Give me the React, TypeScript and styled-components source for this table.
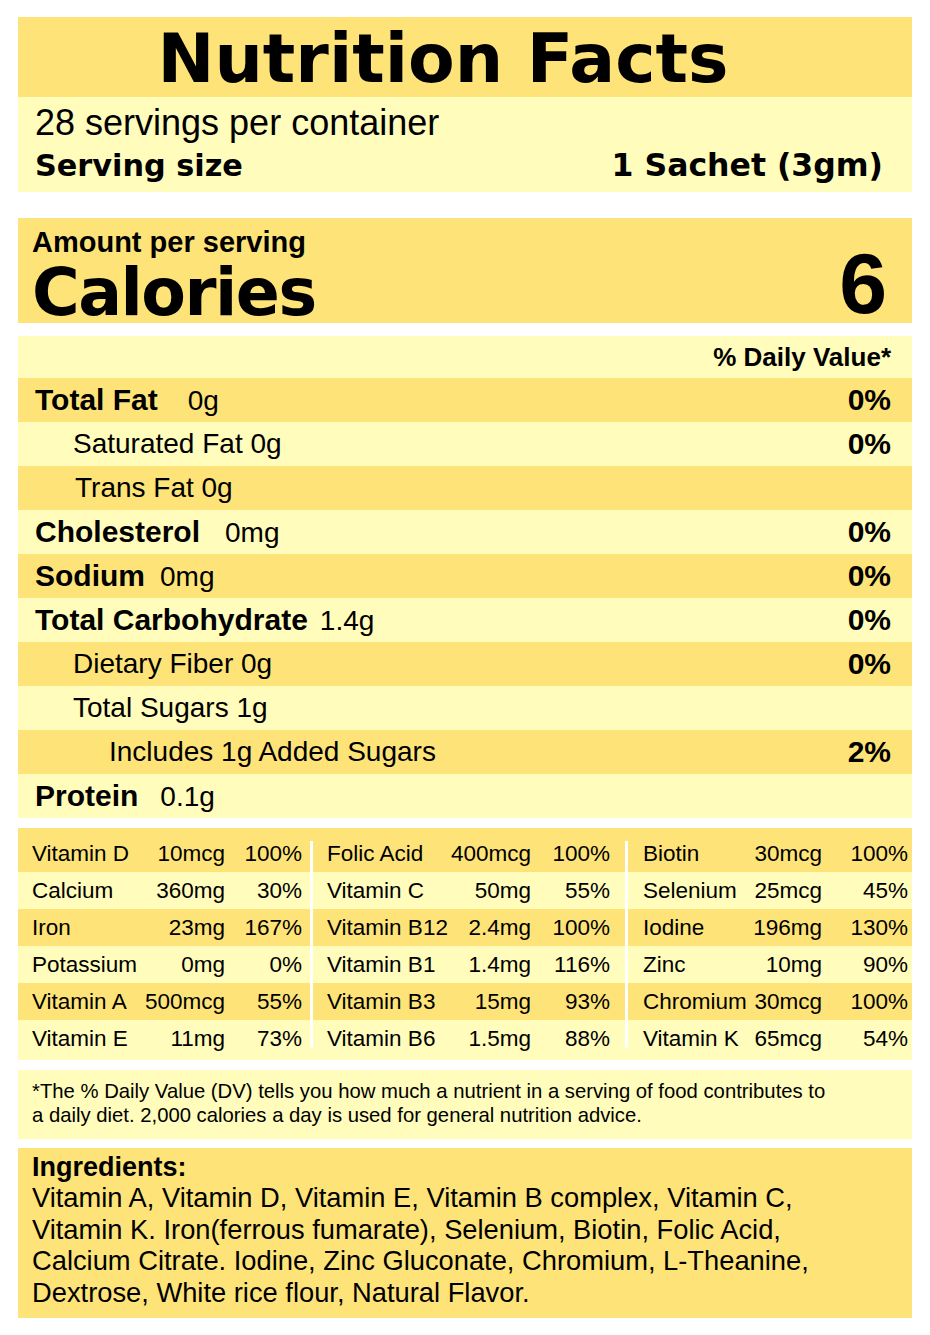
import React from 'react';
import styled, { createGlobalStyle } from 'styled-components';

const DARK = '#FEE478';
const LIGHT = '#FFFCBC';
type Tone = 'dark' | 'light';
const toneBg = (t: Tone) => (t === 'dark' ? DARK : LIGHT);

const GlobalStyle = createGlobalStyle`
  html, body { margin: 0; padding: 0; background: #ffffff; }
  body { font-family: "Liberation Sans", Arial, sans-serif; color: #000; }
  * { box-sizing: border-box; }
`;

const Page = styled.main`
  width: 930px;
  padding: 17px 18px;
  display: flex;
  flex-direction: column;
`;

const TitleBar = styled.h1`
  margin: 0;
  height: 80px;
  padding: 3px 44px 0 0;
  background: ${DARK};
  font-family: "DejaVu Sans", sans-serif;
  font-weight: 700;
  font-size: 68px;
  line-height: 77px;
  text-align: center;
  white-space: nowrap;
`;

const ServingPanel = styled.section`
  background: ${LIGHT};
  padding: 6px 29px 4px 17px;
`;

const ServingsPerContainer = styled.div`
  font-size: 36px;
  line-height: 40px;
`;

const ServingSizeRow = styled.div`
  display: flex;
  justify-content: space-between;
  align-items: baseline;
  font-family: "DejaVu Sans", sans-serif;
  font-weight: 700;
  font-size: 31.5px;
  line-height: 44px;
`;

const ServingSizeLabel = styled.span`
  font-size: 30.3px;
`;

const CaloriesPanel = styled.section`
  margin-top: 26px;
  height: 105px;
  background: ${DARK};
  padding: 8px 25px 0 14px;
  display: flex;
  justify-content: space-between;
`;

const CaloriesLeft = styled.div`
  display: flex;
  flex-direction: column;
`;

const AmountLabel = styled.div`
  font-weight: 700;
  font-size: 29px;
  line-height: 32px;
`;

const CaloriesLabel = styled.div`
  margin-top: 5px;
  font-family: "DejaVu Sans", sans-serif;
  font-weight: 700;
  font-size: 65px;
  letter-spacing: -1.5px;
  line-height: 60px;
`;

const CaloriesValue = styled.div`
  align-self: flex-end;
  font-weight: 700;
  font-size: 86px;
  line-height: 80px;
`;

const NutrientSection = styled.section`
  margin-top: 13px;
  display: flex;
  flex-direction: column;
`;

const NutrientRow = styled.div<{ $tone: Tone; $indent: number; $height: number }>`
  height: ${(p) => p.$height}px;
  background: ${(p) => toneBg(p.$tone)};
  padding: 0 21px 0 ${(p) => p.$indent}px;
  display: flex;
  align-items: center;
  justify-content: space-between;
  white-space: nowrap;
`;

const RowText = styled.div``;

const BoldLabel = styled.span`
  font-weight: 700;
  font-size: 30px;
`;

const PlainLabel = styled.span`
  font-size: 28px;
`;

const Amount = styled.span<{ $gap: number }>`
  font-size: 28px;
  margin-left: ${(p) => p.$gap}px;
`;

const Percent = styled.span`
  font-weight: 700;
  font-size: 30px;
`;

const DailyValueHead = styled.span`
  margin-left: auto;
  font-weight: 700;
  font-size: 26px;
`;

const VitaminPanel = styled.section`
  position: relative;
  margin-top: 10px;
  background: ${LIGHT};
  border-top: 7px solid ${DARK};
  padding-bottom: 3px;
`;

const VitaminRow = styled.div<{ $tone: Tone }>`
  height: 37px;
  background: ${(p) => toneBg(p.$tone)};
  display: grid;
  grid-template-columns: 295px 315px 284px;
  align-items: center;
  font-size: 22.5px;
  white-space: nowrap;
`;

const VitaminGroup = styled.div<{ $pad: number; $cols: string }>`
  display: grid;
  grid-template-columns: ${(p) => p.$cols};
  padding-left: ${(p) => p.$pad}px;
`;

const VitName = styled.span``;
const VitNum = styled.span`
  text-align: right;
`;

const Separator = styled.div<{ $left: number }>`
  position: absolute;
  top: 6px;
  bottom: 12px;
  left: ${(p) => p.$left}px;
  width: 3px;
  background: #ffffff;
`;

const FootnotePanel = styled.section`
  margin-top: 10px;
  background: ${LIGHT};
  padding: 9px 14px 12px;
`;

const Footnote = styled.p`
  margin: 0;
  max-width: 800px;
  font-size: 20.3px;
  line-height: 24px;
`;

const IngredientsPanel = styled.section`
  margin-top: 9px;
  background: ${DARK};
  padding: 4px 14px 9px;
`;

const IngredientsTitle = styled.div`
  font-weight: 700;
  font-size: 27px;
  line-height: 30px;
`;

const IngredientsText = styled.p`
  margin: 0;
  max-width: 810px;
  font-size: 27.3px;
  line-height: 31.67px;
`;

type Nutrient = {
  label: string;
  amount?: string;
  gap?: number;
  pct?: string;
  bold?: boolean;
  indent: number;
};

const nutrients: Nutrient[] = [
  { label: 'Total Fat', amount: '0g', gap: 30, pct: '0%', bold: true, indent: 17 },
  { label: 'Saturated Fat 0g', pct: '0%', indent: 55 },
  { label: 'Trans Fat 0g', indent: 57 },
  { label: 'Cholesterol', amount: '0mg', gap: 25, pct: '0%', bold: true, indent: 17 },
  { label: 'Sodium', amount: '0mg', gap: 15, pct: '0%', bold: true, indent: 17 },
  { label: 'Total Carbohydrate', amount: '1.4g', gap: 12, pct: '0%', bold: true, indent: 17 },
  { label: 'Dietary Fiber 0g', pct: '0%', indent: 55 },
  { label: 'Total Sugars 1g', indent: 55 },
  { label: 'Includes 1g Added Sugars', pct: '2%', indent: 91 },
  { label: 'Protein', amount: '0.1g', gap: 22, bold: true, indent: 17 },
];

type Vit = [string, string, string];
const vitaminGroups: { pad: number; cols: string; items: Vit[] }[] = [
  {
    pad: 14,
    cols: '108px 85px 77px',
    items: [
      ['Vitamin D', '10mcg', '100%'],
      ['Calcium', '360mg', '30%'],
      ['Iron', '23mg', '167%'],
      ['Potassium', '0mg', '0%'],
      ['Vitamin A', '500mcg', '55%'],
      ['Vitamin E', '11mg', '73%'],
    ],
  },
  {
    pad: 14,
    cols: '122px 82px 79px',
    items: [
      ['Folic Acid', '400mcg', '100%'],
      ['Vitamin C', '50mg', '55%'],
      ['Vitamin B12', '2.4mg', '100%'],
      ['Vitamin B1', '1.4mg', '116%'],
      ['Vitamin B3', '15mg', '93%'],
      ['Vitamin B6', '1.5mg', '88%'],
    ],
  },
  {
    pad: 15,
    cols: '108px 71px 86px',
    items: [
      ['Biotin', '30mcg', '100%'],
      ['Selenium', '25mcg', '45%'],
      ['Iodine', '196mg', '130%'],
      ['Zinc', '10mg', '90%'],
      ['Chromium', '30mcg', '100%'],
      ['Vitamin K', '65mcg', '54%'],
    ],
  },
];

export default function App() {
  return (
    <>
      <GlobalStyle />
      <Page>
        <TitleBar>Nutrition Facts</TitleBar>
        <ServingPanel>
          <ServingsPerContainer>28 servings per container</ServingsPerContainer>
          <ServingSizeRow>
            <ServingSizeLabel>Serving size</ServingSizeLabel>
            <span>1 Sachet (3gm)</span>
          </ServingSizeRow>
        </ServingPanel>

        <CaloriesPanel>
          <CaloriesLeft>
            <AmountLabel>Amount per serving</AmountLabel>
            <CaloriesLabel>Calories</CaloriesLabel>
          </CaloriesLeft>
          <CaloriesValue>6</CaloriesValue>
        </CaloriesPanel>

        <NutrientSection>
          <NutrientRow $tone="light" $indent={17} $height={42}>
            <DailyValueHead>% Daily Value*</DailyValueHead>
          </NutrientRow>
          {nutrients.map((n, i) => (
            <NutrientRow key={n.label} $tone={i % 2 === 0 ? 'dark' : 'light'} $indent={n.indent} $height={44}>
              <RowText>
                {n.bold ? <BoldLabel>{n.label}</BoldLabel> : <PlainLabel>{n.label}</PlainLabel>}
                {n.amount && <Amount $gap={n.gap ?? 8}>{n.amount}</Amount>}
              </RowText>
              {n.pct && <Percent>{n.pct}</Percent>}
            </NutrientRow>
          ))}
        </NutrientSection>

        <VitaminPanel>
          {[0, 1, 2, 3, 4, 5].map((r) => (
            <VitaminRow key={r} $tone={r % 2 === 0 ? 'dark' : 'light'}>
              {vitaminGroups.map((g, gi) => {
                const [name, amt, pct] = g.items[r];
                return (
                  <VitaminGroup key={gi} $pad={g.pad} $cols={g.cols}>
                    <VitName>{name}</VitName>
                    <VitNum>{amt}</VitNum>
                    <VitNum>{pct}</VitNum>
                  </VitaminGroup>
                );
              })}
            </VitaminRow>
          ))}
          <Separator $left={292} />
          <Separator $left={607} />
        </VitaminPanel>

        <FootnotePanel>
          <Footnote>
            *The % Daily Value (DV) tells you how much a nutrient in a serving of food contributes to a daily
            diet. 2,000 calories a day is used for general nutrition advice.
          </Footnote>
        </FootnotePanel>

        <IngredientsPanel>
          <IngredientsTitle>Ingredients:</IngredientsTitle>
          <IngredientsText>
            Vitamin A, Vitamin D, Vitamin E, Vitamin B complex, Vitamin C, Vitamin K. Iron(ferrous fumarate),
            Selenium, Biotin, Folic Acid, Calcium Citrate. Iodine, Zinc Gluconate, Chromium, L-Theanine,
            Dextrose, White rice flour, Natural Flavor.
          </IngredientsText>
        </IngredientsPanel>
      </Page>
    </>
  );
}
